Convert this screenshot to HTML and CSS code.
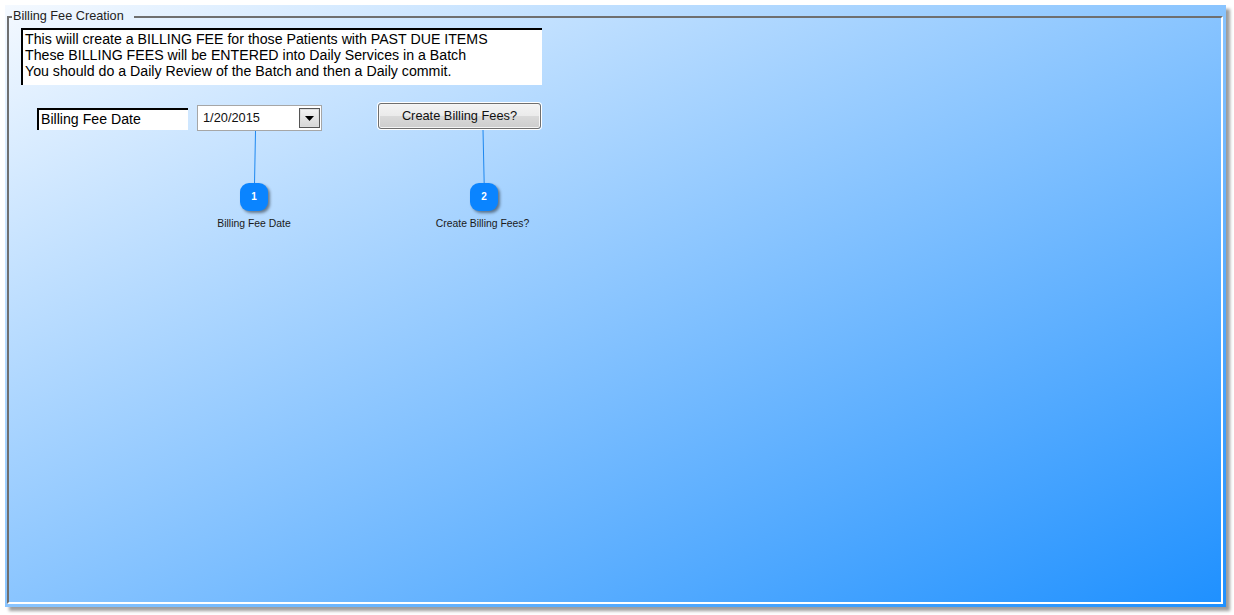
FILE: index.html
```html
<!DOCTYPE html>
<html lang="en">
<head>
<meta charset="utf-8">
<title>Billing Fee Creation</title>
<link rel="stylesheet" href="styles.css">
</head>
<body>
<div class="panel">
  <fieldset class="group">
    <legend class="group-title">Billing Fee Creation</legend>
    <div class="notice">
      <div>This wiill create a BILLING FEE for those Patients with PAST DUE ITEMS</div>
      <div>These BILLING FEES will be ENTERED into Daily Services in a Batch</div>
      <div>You should do a Daily Review of the Batch and then a Daily commit.</div>
    </div>
    <div class="controls">
      <div class="date-label">Billing Fee Date</div>
      <div class="date-field">
        <span class="date-value">1/20/2015</span>
        <span class="date-arrow"><svg width="9" height="5" viewBox="0 0 9 5"><path d="M0 0h9L4.5 5z" fill="#000"/></svg></span>
      </div>
      <button class="create-btn" type="button">Create Billing Fees?</button>
    </div>
  </fieldset>
  <svg class="connectors" width="1234" height="200" viewBox="0 0 1234 200">
    <path d="M255.5 131 L254.5 184" stroke="#1e88f0" stroke-width="1" fill="none"/>
    <path d="M483 130 L484.2 184" stroke="#1e88f0" stroke-width="1" fill="none"/>
  </svg>
  <div class="callout callout-1"><span class="badge">1</span><span class="callout-text">Billing Fee Date</span></div>
  <div class="callout callout-2"><span class="badge">2</span><span class="callout-text">Create Billing Fees?</span></div>
</div>
</body>
</html>
```

FILE: styles.css
```css
html, body {
  margin: 0;
  padding: 0;
  width: 1234px;
  height: 615px;
  overflow: hidden;
  background: #fff;
  font-family: "Liberation Sans", Arial, sans-serif;
}
.panel {
  position: relative;
  box-sizing: border-box;
  width: 1221px;
  height: 602px;
  margin: 5px 0 0 5px;
  padding: 4px 3px 3px 2px;
  background-image: linear-gradient(to bottom right, #f4f9ff 0%, #1e90ff 100%);
  box-shadow: 4px 4px 3px rgba(0, 0, 0, .38);
}
.group {
  box-sizing: border-box;
  height: 100%;
  margin: 0;
  padding: 0 0 0 12px;
  border-style: solid;
  border-width: 2px;
  border-color: #6f6f6f #fff #fff #6f6f6f;
  min-width: 0;
}
.group-title {
  margin: 0 0 0 -9px;
  padding: 0 10px 2px 1px;
  font-size: 12.7px;
  line-height: 14px;
  color: #222;
}
.notice {
  box-sizing: border-box;
  width: 521px;
  height: 57px;
  margin-top: 3px;
  padding: 1px 0 0 2px;
  background: #fff;
  border-top: 2px solid #000;
  border-left: 2px solid #000;
  font-size: 14.18px;
  line-height: 16px;
  color: #000;
}
.controls {
  display: flex;
  align-items: flex-start;
  margin-top: 18px;
  margin-left: 16px;
}
.date-label {
  box-sizing: border-box;
  width: 151px;
  height: 22px;
  margin-top: 5px;
  padding: 0 0 0 2px;
  background: #fff;
  border-top: 2px solid #000;
  border-left: 2px solid #000;
  font-size: 14.15px;
  line-height: 18px;
  color: #000;
}
.date-field {
  box-sizing: border-box;
  display: flex;
  align-items: center;
  justify-content: space-between;
  width: 125px;
  height: 26px;
  margin-top: 2px;
  margin-left: 9px;
  padding: 0 1px 0 5px;
  background: #fff;
  border: 1px solid #a6a6a6;
  font-size: 12.8px;
  color: #111;
}
.date-value {
  margin-top: -2px;
}
.date-arrow {
  box-sizing: border-box;
  display: flex;
  align-items: center;
  justify-content: center;
  width: 21px;
  height: 20px;
  background: linear-gradient(#f4f4f4, #d6d6d6);
  border: 1px solid #555;
  outline: 1px solid #ddd;
  outline-offset: -2px;
}
.create-btn {
  box-sizing: border-box;
  width: 163px;
  height: 26px;
  margin-left: 56px;
  padding: 0 0 1px;
  background: linear-gradient(#f3f3f3 0%, #ebebeb 48%, #d9d9d9 52%, #cdcdcd 100%);
  border: 1px solid #6e6e6e;
  border-radius: 3px;
  box-shadow: 0 0 0 1px #fff, inset 0 0 0 1px #f5f5f5;
  font-family: inherit;
  font-size: 12.8px;
  color: #111;
}
.connectors {
  position: absolute;
  left: -5px;
  top: -5px;
  pointer-events: none;
}
.callout {
  position: absolute;
  top: 178px;
  display: flex;
  flex-direction: column;
  align-items: center;
  width: 140px;
}
.callout-1 { left: 179px; }
.callout-2 { left: 409px; }
.callout-2 .callout-text { margin-right: 3px; }
.badge {
  box-sizing: border-box;
  width: 28px;
  height: 28px;
  border-radius: 9px;
  background: #0a84ff;
  box-shadow: 2px 2px 3px rgba(0, 0, 0, .45);
  color: #fff;
  font-size: 10px;
  font-weight: 700;
  line-height: 28px;
  text-align: center;
}
.callout-text {
  margin-top: 6px;
  font-size: 10.4px;
  line-height: 14px;
  color: #1a1a1a;
  white-space: nowrap;
}
```
